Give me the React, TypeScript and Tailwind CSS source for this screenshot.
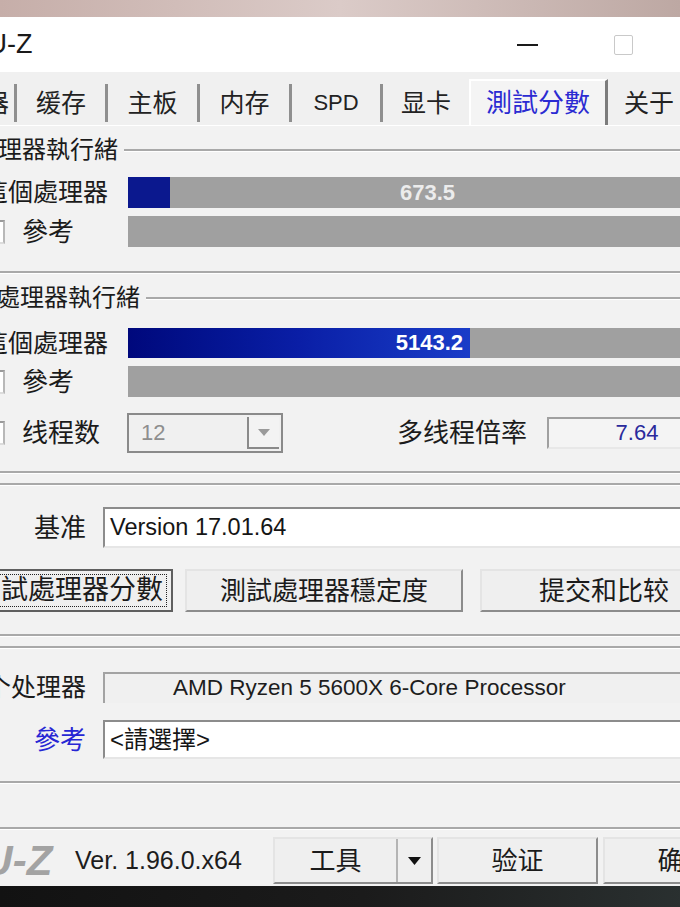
import React from "react";

const tabs = [
  { label: "處理器", w: "w-[17px]", first: true },
  { label: "缓存", w: "w-[91px]" },
  { label: "主板", w: "w-[92px]" },
  { label: "内存", w: "w-[92px]" },
  { label: "SPD", w: "w-[91px]" },
  { label: "显卡", w: "w-[89px]" },
];

function Etch({ className = "" }: { className?: string }) {
  return <div className={`h-[3px] shrink-0 border-t-2 border-[#a9a9a9] bg-white ${className}`} />;
}

function CheckStub() {
  return (
    <div className="-ml-[19px] h-[24px] w-[24px] shrink-0 border-2 border-t-[#9a9a9a] border-l-[#9a9a9a] border-r-[#b8b8b8] border-b-[#dcdcdc] bg-white" />
  );
}

function GroupTitle({ text, shift, className = "" }: { text: string; shift: string; className?: string }) {
  return (
    <div className={`flex h-[26px] items-center ${className}`}>
      <span className={`${shift} shrink-0 whitespace-nowrap text-[24px] leading-none text-[#1b1b1b]`}>{text}</span>
      <div className="ml-[6px] h-[3px] flex-1 border-t-2 border-[#a9a9a9] bg-white" />
    </div>
  );
}

function Bar({ fill, value, big }: { fill: number; value: string; big?: boolean }) {
  return (
    <div className="relative h-full flex-1 bg-[#a0a0a0]">
      {big ? (
        <div
          className="flex h-full items-center justify-end bg-gradient-to-r from-[#00087c] via-[#0a1ea6] to-[#1a3cc8] pr-[7px]"
          style={{ width: fill }}
        >
          <span className="text-[22px] font-bold leading-none text-white">{value}</span>
        </div>
      ) : (
        <>
          <div className="h-full bg-[#0b188e]" style={{ width: fill }} />
          <span className="absolute inset-0 flex items-center justify-center text-[22px] font-bold leading-none text-[#ececec]">
            {value}
          </span>
        </>
      )}
    </div>
  );
}

const raised =
  "border-2 border-t-[#e4e4e4] border-l-[#e4e4e4] border-r-[#8c8c8c] border-b-[#8c8c8c] bg-[#efefef]";

export default function App() {
  return (
    <div className="flex h-[907px] w-[680px] flex-col overflow-hidden bg-[#f0f0f0] font-['Liberation_Sans','Noto_Sans_CJK_SC',sans-serif] text-[#1b1b1b]">
      {/* desktop behind */}
      <div className="h-[17px] shrink-0 bg-gradient-to-r from-[#c6aea9] via-[#dbcbc8] to-[#bda8a3]" />

      {/* title bar */}
      <div className="flex h-[55px] shrink-0 items-center bg-white">
        <span className="-ml-[50px] whitespace-nowrap text-[27px] leading-none text-[#1a1a1a]">CPU-Z</span>
        <div className="ml-auto flex items-center pr-[47px]">
          <div className="h-[2px] w-[21px] bg-[#1a1a1a]" />
          <div className="ml-[76px] h-[20px] w-[19px] rounded-[2px] border-[1.5px] border-[#c9c9c9]" />
        </div>
      </div>

      {/* tabs */}
      <div className="flex h-[53px] shrink-0 items-end">
        {tabs.map((t) => (
          <div
            key={t.label}
            className={`${t.w} mb-[3px] flex h-[38px] shrink-0 items-center overflow-hidden border-r-[3px] border-[#8f8f8f] ${
              t.first ? "justify-end pr-[5px]" : "justify-center"
            } text-[25px] leading-none text-[#222]`}
          >
            <span className={`whitespace-nowrap ${t.label === "SPD" ? "text-[22px]" : ""}`}>{t.label}</span>
          </div>
        ))}
        <div className="-ml-[3px] flex h-[46px] w-[139px] shrink-0 items-center justify-center border-t-2 border-l-2 border-r-[3px] border-t-[#ffffff] border-l-[#ffffff] border-r-[#7c7c7c] bg-[#f4f4f4] text-[26px] leading-none text-[#2b2bd2]">
          測試分數
        </div>
        <div className="mb-[3px] flex h-[38px] w-[82px] shrink-0 items-center justify-center text-[25px] leading-none text-[#222]">
          关于
        </div>
      </div>

      {/* tab page */}
      <div className="flex w-[727px] flex-1 flex-col border-t border-white bg-[#f2f2f2]">
        <GroupTitle text="單處理器執行緒" shift="-ml-[50px]" className="mt-[11px]" />

        <div className="mt-[14px] flex h-[31px] items-center">
          <div className="flex w-[128px] shrink-0 justify-end overflow-hidden pr-[20px] text-[25px] leading-none">
            <span className="shrink-0 whitespace-nowrap">這個處理器</span>
          </div>
          <Bar fill={42} value="673.5" />
        </div>
        <div className="mt-[8px] flex h-[31px] items-center">
          <div className="flex w-[128px] shrink-0 items-center overflow-hidden text-[26px] leading-none">
            <CheckStub />
            <span className="ml-[17px] whitespace-nowrap">參考</span>
          </div>
          <Bar fill={0} value="" />
        </div>

        <Etch className="mt-[24px]" />

        <GroupTitle text="多處理器執行緒" shift="-ml-[28px]" className="mt-[11px]" />

        <div className="mt-[17px] flex h-[30px] items-center">
          <div className="flex w-[128px] shrink-0 justify-end overflow-hidden pr-[20px] text-[25px] leading-none">
            <span className="shrink-0 whitespace-nowrap">這個處理器</span>
          </div>
          <Bar fill={342} value="5143.2" big />
        </div>
        <div className="mt-[8px] flex h-[31px] items-center">
          <div className="flex w-[128px] shrink-0 items-center overflow-hidden text-[26px] leading-none">
            <CheckStub />
            <span className="ml-[17px] whitespace-nowrap">參考</span>
          </div>
          <Bar fill={0} value="" />
        </div>
        <div className="mt-[16px] flex h-[40px] items-center">
          <div className="flex w-[127px] shrink-0 items-center overflow-hidden text-[26px] leading-none">
            <CheckStub />
            <span className="ml-[17px] whitespace-nowrap">线程数</span>
          </div>
          <div className="flex h-[40px] w-[156px] shrink-0 items-center border-2 border-[#8a8a8a] bg-[#f0f0f0]">
            <span className="pl-[12px] text-[22px] leading-none text-[#8e8e8e]">12</span>
            <div className="ml-auto mr-[2px] flex h-[32px] w-[32px] items-center justify-center border-b-2 border-l-2 border-[#8a8a8a] bg-[#f3f3f3]">
              <svg width="12" height="7" viewBox="0 0 12 7">
                <polygon points="0,0 12,0 6,7" fill="#9a9a9a" />
              </svg>
            </div>
          </div>
          <span className="ml-[114px] whitespace-nowrap text-[26px] leading-none">多线程倍率</span>
          <div className="ml-[20px] flex h-[32px] flex-1 items-center justify-center border-2 border-t-[#a0a0a0] border-l-[#a0a0a0] border-r-[#e8e8e8] border-b-[#e8e8e8] bg-[#f4f4f4]">
            <span className="text-[22px] leading-none text-[#2a2a9c]">7.64</span>
          </div>
        </div>

        <Etch className="mt-[18px]" />
        <Etch className="mt-[9px]" />

        <div className="mt-[21px] flex h-[41px] items-center">
          <div className="flex w-[103px] shrink-0 justify-end pr-[17px] text-[26px] leading-none">基准</div>
          <div className="flex h-full flex-1 items-center border-2 border-t-[#8c8c8c] border-l-[#8c8c8c] border-r-[#e6e6e6] border-b-[#e6e6e6] bg-white pl-[5px]">
            <span className="text-[23.5px] leading-none text-[#151515]">Version 17.01.64</span>
          </div>
        </div>

        <div className="mt-[21px] flex h-[43px] items-stretch">
          <div className="-ml-[117px] flex w-[290px] shrink-0 items-center justify-end border-2 border-[#5f5f5f] bg-[#efefef] pr-[4px]">
            <div className="flex h-[33px] items-center border border-dotted border-[#222] px-[3px] text-[27px] leading-none">
              <span className="whitespace-nowrap">測試處理器分數</span>
            </div>
          </div>
          <div className={`ml-[12px] flex w-[278px] shrink-0 items-center justify-center ${raised} text-[26px] leading-none`}>
            測試處理器穩定度
          </div>
          <div className={`ml-[17px] flex w-[248px] shrink-0 items-center justify-center ${raised} text-[26px] leading-none`}>
            提交和比较
          </div>
        </div>

        <Etch className="mt-[22px]" />
        <Etch className="mt-[9px]" />

        <div className="mt-[23px] flex h-[31px] items-center">
          <div className="flex w-[103px] shrink-0 justify-end overflow-hidden pr-[17px] text-[25px] leading-none">
            <span className="shrink-0 whitespace-nowrap">这个处理器</span>
          </div>
          <div className="flex h-full flex-1 items-center border-t-2 border-l-2 border-[#a3a3a3] bg-[#f0f0f0] pl-[68px]">
            <span className="whitespace-nowrap text-[22.5px] leading-none text-[#1d1d1d]">
              AMD Ryzen 5 5600X 6-Core Processor
            </span>
          </div>
        </div>
        <div className="mt-[17px] flex h-[39px] items-center">
          <div className="flex w-[103px] shrink-0 justify-end pr-[17px] text-[26px] leading-none text-[#2626d4]">參考</div>
          <div className="flex h-full flex-1 items-center border-2 border-t-[#8c8c8c] border-l-[#8c8c8c] border-r-[#e6e6e6] border-b-[#e6e6e6] bg-white pl-[5px]">
            <span className="text-[24px] leading-none text-[#151515]">&lt;請選擇&gt;</span>
          </div>
        </div>

        <Etch className="mt-[22px]" />
        <Etch className="mt-[43px]" />

        {/* bottom bar */}
        <div className="mt-[7px] flex h-[47px] items-stretch">
          <div className="flex w-[75px] shrink-0 items-center overflow-hidden">
            <span className="-ml-[76px] shrink-0 whitespace-nowrap font-['Liberation_Sans_Narrow','Liberation_Sans',sans-serif] text-[42px] font-bold italic leading-none text-[#a3a3a3]">
              CPU-Z
            </span>
          </div>
          <div className="flex w-[198px] shrink-0 items-center text-[25px] leading-none text-[#1d1d1d]">Ver. 1.96.0.x64</div>
          <div className={`flex w-[160px] shrink-0 ${raised}`}>
            <div className="flex flex-1 items-center justify-center text-[26px] leading-none">工具</div>
            <div className="flex w-[35px] items-center justify-center border-l-2 border-[#b4b4b4]">
              <svg width="13" height="8" viewBox="0 0 13 8">
                <polygon points="0,0 13,0 6.5,8" fill="#111" />
              </svg>
            </div>
          </div>
          <div className={`ml-[4px] flex w-[161px] shrink-0 items-center justify-center ${raised} text-[26px] leading-none`}>
            验证
          </div>
          <div className={`ml-[5px] flex w-[161px] shrink-0 items-center justify-center ${raised} text-[26px] leading-none`}>
            确定
          </div>
        </div>

        <div className="mt-[2px] flex-1 bg-gradient-to-r from-[#121212] via-[#1b1b1b] to-[#2c3333]" />
      </div>
    </div>
  );
}
